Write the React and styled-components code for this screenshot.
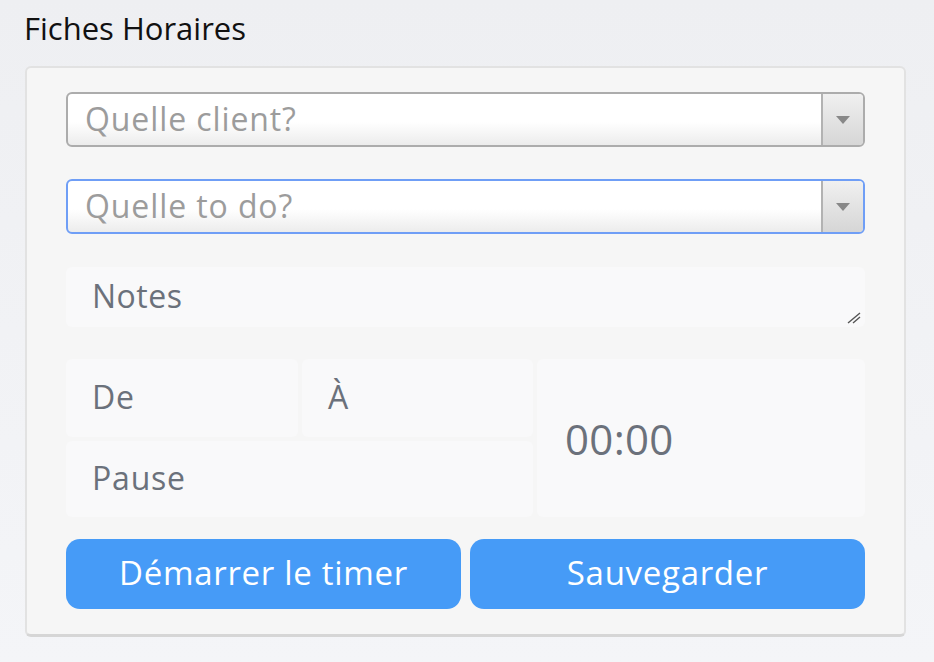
import styled, { createGlobalStyle } from 'styled-components';

const GlobalStyle = createGlobalStyle`
  html, body {
    margin: 0;
    padding: 0;
  }
  body {
    font-family: "Open Sans", "Noto Sans", sans-serif;
    background: linear-gradient(180deg, #eeeff2 0%, #f4f5f8 100%);
    min-height: 100vh;
  }
`;

const Page = styled.div`
  padding: 8px 28px 0 24px;
  width: 934px;
  box-sizing: border-box;
`;

const Title = styled.h2`
  margin: 0 0 18px 0;
  font-size: 31px;
  font-weight: 400;
  line-height: 40px;
  color: #111;
`;

const Card = styled.div`
  margin-left: 1px;
  width: 881px;
  box-sizing: border-box;
  background: #f6f6f6;
  border: 2px solid #e2e2e2;
  border-bottom-width: 3px;
  border-bottom-color: #d6d6d6;
  border-radius: 6px;
  padding: 24px 39px 25px 39px;
  display: flex;
  flex-direction: column;
`;

const Select = styled.div`
  height: 55px;
  box-sizing: border-box;
  border: 2px solid ${(p) => (p.$focused ? '#6f9ef6' : '#acacac')};
  border-radius: 6px;
  background: linear-gradient(180deg, #ffffff 55%, #ececec 100%);
  display: flex;
  align-items: center;
  margin-bottom: ${(p) => p.$mb || 0}px;
  overflow: hidden;
`;

const Placeholder = styled.span`
  flex: 1;
  padding-left: 17px;
  font-size: 32px;
  letter-spacing: 0.9px;
  color: #9c9c9c;
  line-height: 40px;
  padding-bottom: 2px;
`;

const Arrow = styled.div`
  width: 40px;
  align-self: stretch;
  border-left: 2px solid #b2b2b2;
  background: linear-gradient(180deg, #f0f0f0 0%, #d6d6d6 100%);
  display: flex;
  align-items: center;
  justify-content: center;

  &::after {
    content: '';
    border-left: 7px solid transparent;
    border-right: 7px solid transparent;
    border-top: 8px solid #888;
  }
`;

const Notes = styled.div`
  position: relative;
  height: 60px;
  margin-top: 33px;
  border-radius: 6px;
  background: #f9f9fa;
  box-sizing: border-box;
  padding: 9px 26px;
  font-size: 32px;
  letter-spacing: 0.5px;
  color: #6b717b;
  line-height: 40px;
`;

const Resize = styled.svg`
  position: absolute;
  right: 4px;
  bottom: 3px;
`;

const TimeGrid = styled.div`
  margin-top: 32px;
  display: grid;
  grid-template-columns: 232px 231px 1fr;
  grid-template-rows: 78px 76px;
  gap: 4px;
`;

const Field = styled.div`
  background: #f9f9fa;
  border-radius: 6px;
  display: flex;
  align-items: center;
  padding-left: 26px;
  padding-bottom: 4px;
  font-size: 32px;
  letter-spacing: 0.8px;
  color: #6b717b;
  grid-column: ${(p) => p.$col || 'auto'};
  grid-row: ${(p) => p.$row || 'auto'};
`;

const Timer = styled(Field)`
  font-size: 42px;
  letter-spacing: 0.3px;
  padding-left: 28px;
  padding-bottom: 0;
`;

const Buttons = styled.div`
  margin-top: 22px;
  display: grid;
  grid-template-columns: 1fr 1fr;
  gap: 9px;
`;

const Button = styled.button`
  height: 70px;
  border: none;
  border-radius: 14px;
  background: #469bf7;
  color: #fff;
  font-family: inherit;
  font-size: 33px;
  letter-spacing: 0.7px;
  padding: 0 0 3px 0;
  cursor: pointer;
`;

export default function App() {
  return (
    <>
      <GlobalStyle />
      <Page>
        <Title>Fiches Horaires</Title>
        <Card>
          <Select $mb={32}>
            <Placeholder>Quelle client?</Placeholder>
            <Arrow />
          </Select>
          <Select $focused>
            <Placeholder>Quelle to do?</Placeholder>
            <Arrow />
          </Select>
          <Notes>
            Notes
            <Resize width="14" height="12" viewBox="0 0 14 12">
              <path d="M1 11 L13 1 M6 11 L13 5" stroke="#555" strokeWidth="1.4" />
            </Resize>
          </Notes>
          <TimeGrid>
            <Field>De</Field>
            <Field>À</Field>
            <Timer $col="3" $row="1 / span 2">00:00</Timer>
            <Field $col="1 / span 2">Pause</Field>
          </TimeGrid>
          <Buttons>
            <Button>Démarrer le timer</Button>
            <Button>Sauvegarder</Button>
          </Buttons>
        </Card>
      </Page>
    </>
  );
}
